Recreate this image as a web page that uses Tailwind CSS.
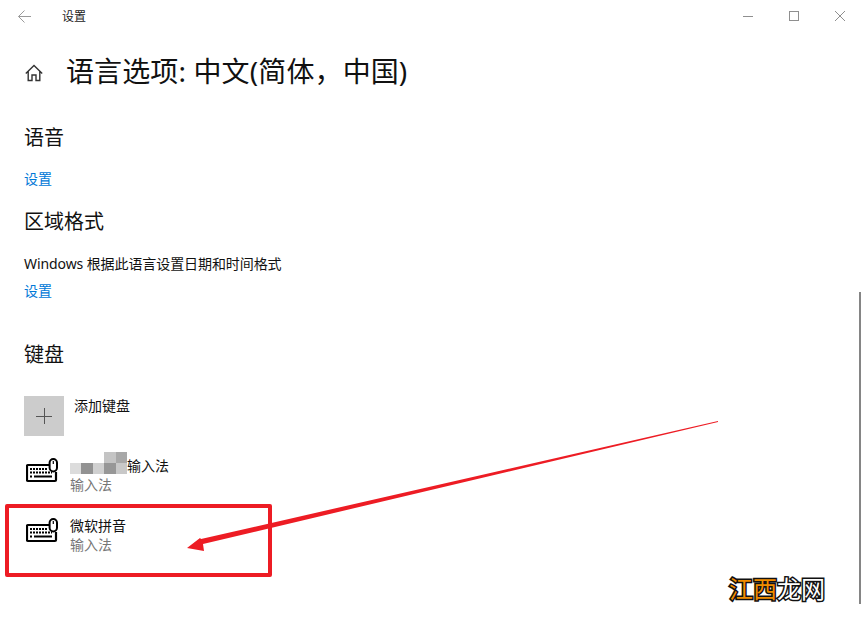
<!DOCTYPE html>
<html lang="zh-CN">
<head>
    <meta charset="UTF-8">
    <title>设置</title>
    <script src="https://cdn.jsdelivr.net/npm/@tailwindcss/browser@4"></script>
</head>
<body class="bg-white text-black font-['Noto_Sans','Noto_Sans_CJK_SC',sans-serif]">
<div class="relative w-[863px] h-[620px] overflow-hidden bg-white">

    <!-- Title bar -->
    <div class="flex items-center h-[32px] pl-[18px]">
        <svg class="w-[13px] h-[13px] text-[#9a9a9a]" viewBox="0 0 13 13" fill="none" stroke="currentColor" stroke-width="1"><path d="M0.5 6.5H13M6.5 0.5L0.5 6.5L6.5 12.5"/></svg>
        <span class="ml-[31px] mt-[2px] text-[12px] leading-[16px] text-[#222]">设置</span>
        <div class="ml-auto flex items-center gap-[36px] pr-[18px] text-[#8f8f8f]">
            <svg class="w-[10px] h-[10px]" viewBox="0 0 10 10" stroke="currentColor" fill="none"><path d="M0 5.5H10"/></svg>
            <svg class="w-[10px] h-[10px]" viewBox="0 0 10 10" stroke="currentColor" fill="none"><rect x="0.5" y="0.5" width="9" height="9"/></svg>
            <svg class="w-[10px] h-[10px]" viewBox="0 0 10 10" stroke="currentColor" fill="none"><path d="M0 0L10 10M10 0L0 10"/></svg>
        </div>
    </div>

    <!-- Page heading -->
    <div class="flex items-center mt-[18px] pl-[25px] h-[42px]">
        <svg class="w-[18px] h-[18px] mt-[3px] text-[#333]" viewBox="0 0 18 18" fill="none" stroke="currentColor" stroke-width="1.4"><path d="M0.8 9.5L9 1.5L17.2 9.5M3.2 7.5V16.5H7V11H11V16.5H14.8V7.5"/></svg>
        <h1 class="ml-[23px] text-[28px] leading-[42px] tracking-[0.12px] whitespace-nowrap text-[#111]">语言选项: 中文(简体，中国)</h1>
    </div>

    <!-- Sections -->
    <div class="pl-[24px]">
        <h2 class="mt-[32px] text-[20px] leading-[28px] text-[#111]">语音</h2>
        <a class="block mt-[17px] w-fit text-[14px] leading-[20px] text-[#0078d7]">设置</a>

        <h2 class="mt-[19px] text-[20px] leading-[28px] text-[#111]">区域格式</h2>
        <p class="mt-[18px] text-[14px] leading-[20px] tracking-[-0.09px] text-[#111]">Windows 根据此语言设置日期和时间格式</p>
        <a class="block mt-[7px] w-fit text-[14px] leading-[20px] text-[#0078d7]">设置</a>

        <h2 class="mt-[40px] text-[20px] leading-[28px] text-[#111]">键盘</h2>

        <div class="flex mt-[27px] h-[40px]">
            <div class="flex items-center justify-center w-[40px] h-[40px] bg-[#cccccc]">
                <svg class="w-[16px] h-[16px] text-[#555]" viewBox="0 0 16 16" stroke="currentColor" fill="none"><path d="M0 8.5H16M8.5 0V16"/></svg>
            </div>
            <span class="ml-[10px] text-[14px] leading-[20px] text-[#111]">添加键盘</span>
        </div>

        <div class="flex items-center mt-[16px] h-[40px]">
            <svg class="w-[32px] h-[25px] ml-[2px] mb-[4px] text-black" viewBox="0 0 32 25" fill="none" stroke="currentColor"><use href="#kbd"/></svg>
            <div class="ml-[12px] w-[120px] pt-[6px]">
                <p class="pl-[57px] text-[14px] leading-[19px] text-[#111]">输入法</p>
                <p class="text-[14px] leading-[19px] text-[#777]">输入法</p>
            </div>
        </div>

        <div class="flex items-center mt-[20px] h-[40px]">
            <svg class="w-[32px] h-[25px] ml-[2px] mb-[4px] text-black" viewBox="0 0 32 25" fill="none" stroke="currentColor"><use href="#kbd"/></svg>
            <div class="ml-[12px] pt-[6px]">
                <p class="text-[14px] leading-[19px] text-[#111]">微软拼音</p>
                <p class="text-[14px] leading-[19px] text-[#777]">输入法</p>
            </div>
        </div>
    </div>

    <!-- Keyboard icon -->
    <svg class="absolute w-0 h-0">
        <defs>
            <g id="kbd">
                <path stroke-width="2.2" d="M23 7H2C1.4 7 1 7.4 1 8V22C1 22.6 1.4 23 2 23H29C29.6 23 30 22.6 30 22V14"/>
                <rect x="23.6" y="1" width="7.4" height="12.4" rx="3.7" stroke-width="2"/>
                <path stroke-width="1.2" d="M27.3 3V6"/>
                <path stroke-width="2" stroke-dasharray="2 1" d="M4 11H22M4 14.5H26"/>
                <path stroke-width="2" d="M8 18.5H26M4 18.5H6"/>
            </g>
        </defs>
    </svg>

    <!-- Blurred mosaic over the first IME name -->
    <div class="absolute left-[70px] top-[452px] grid grid-cols-5 w-[57px]">
        <div class="h-[11px] bg-white"></div><div class="h-[11px] bg-white"></div><div class="h-[11px] bg-white"></div><div class="h-[11px] bg-[#c4c4c4]"></div><div class="h-[11px] bg-[#a8a8a8]"></div>
        <div class="h-[11px] bg-[#dcdcdc]"></div><div class="h-[11px] bg-[#929292]"></div><div class="h-[11px] bg-[#d0d0d0]"></div><div class="h-[11px] bg-[#979797]"></div><div class="h-[11px] bg-[#c8c8c8]"></div>
    </div>

    <!-- Red annotation -->
    <div class="absolute left-[5px] top-[504px] w-[267px] h-[73px] border-[4px] border-[#ed1c24] rounded-[2px]"></div>
    <svg class="absolute left-0 top-0 w-[863px] h-[620px] pointer-events-none" viewBox="0 0 863 620">
        <polygon fill="#ed1c24" points="718,421 718,422 203,544 204,551 187,548 200,538 201,539"/>
    </svg>

    <!-- Scrollbar -->
    <div class="absolute left-[859px] top-[292px] w-[2px] h-[312px] bg-[#858585]"></div>

    <!-- Watermark -->
    <div class="absolute left-[729px] top-[573px] flex text-[24px] leading-[32px] font-normal [-webkit-text-stroke:3px_#111] [paint-order:stroke_fill]">
        <span class="text-[#f08c00]">江西</span><span class="text-white">龙网</span>
    </div>
</div>
</body>
</html>
